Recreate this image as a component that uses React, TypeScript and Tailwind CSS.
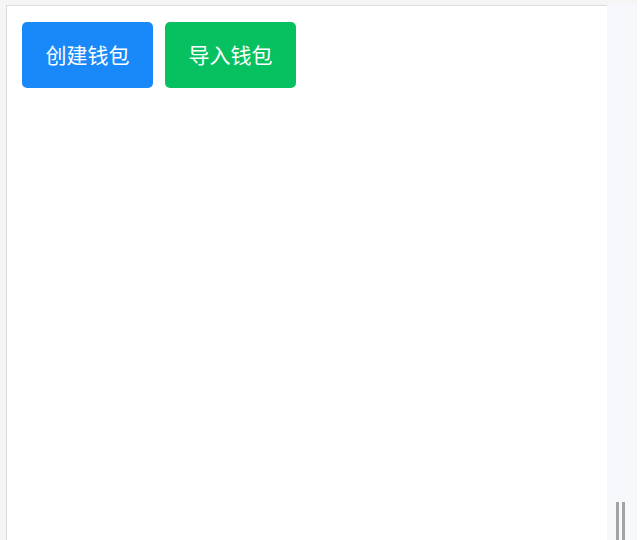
export default function App() {
  return (
    <div className="w-[641px] h-[540px] bg-[#f5f5f5] flex overflow-hidden" style={{ fontFamily: '"Noto Sans CJK SC", "Noto Sans", sans-serif' }}>
      <div className="ml-[6px] mt-[5px] w-[601px] h-[535px] bg-white border-l border-t border-[#dcdcdc] flex items-start gap-[12px] pl-[15px] pt-[16px]">
        <button className="w-[131px] h-[66px] rounded-[5px] bg-[#1989fa] text-white text-[21px] flex items-center justify-center">创建钱包</button>
        <button className="w-[131px] h-[66px] rounded-[5px] bg-[#07c160] text-white text-[21px] flex items-center justify-center">导入钱包</button>
      </div>
      <div className="mt-[5px] w-[30px] h-[535px] bg-[#f7f8fc] flex flex-col justify-end">
        <div className="flex gap-[3px] pl-[9px] h-[38px]">
          <div className="w-[3px] h-full bg-[#a3a3a3]" />
          <div className="w-[3px] h-full bg-[#a3a3a3]" />
        </div>
      </div>
      <div className="flex-1 h-full bg-white" />
    </div>
  );
}
